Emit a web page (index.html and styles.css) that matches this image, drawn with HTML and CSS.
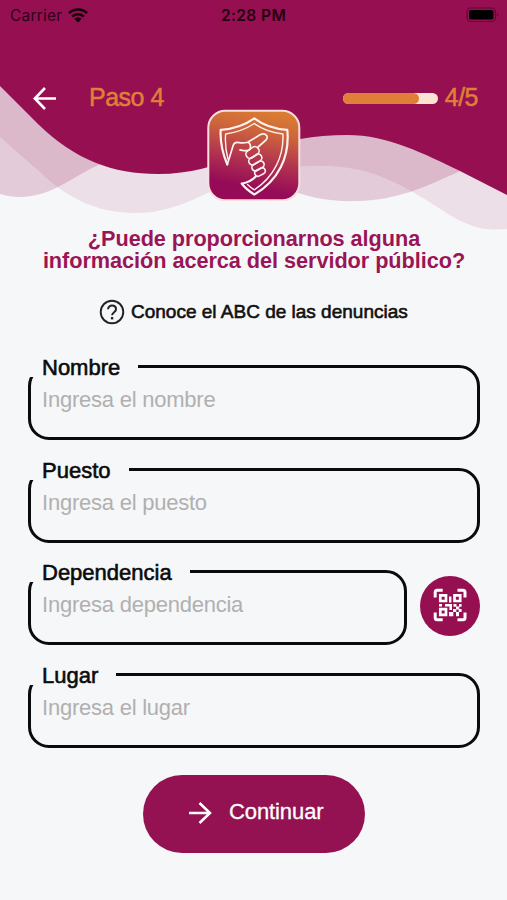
FILE: index.html
```html
<!DOCTYPE html>
<html lang="es">
<head>
<meta charset="utf-8">
<title>Paso 4</title>
<link rel="stylesheet" href="styles.css">
</head>
<body>
<div class="screen">
  <svg class="waves" viewBox="0 0 507 240" aria-hidden="true">
    <path fill="#940f50" fill-opacity=".1" d="M0 0V137L40 172C72 203 103 213 137 213C174 213 202 194 235 181C275 165 325 162 360 170C407 181 443 214 463 222C480 230 492 230 507 229V0Z"/>
    <path fill="#940f50" fill-opacity=".19" d="M0 0V194C18 199 36 198 58 187C76 178 91 166 115 159C180 140 240 168 280 186C307 198 332 202 358 201C397 200 426 187 460 171L507 120V0Z"/>
    <path fill="#960f51" d="M0 0V86L38 124C75 160 113 174 158 174C190 174 216 166 240 156C278 142 309 135 347 135C389 135 424 154 460 171L507 195V0Z"/>
  </svg>
  <header class="status">
    <div class="carrier"><span>Carrier</span>
      <svg width="20" height="15" viewBox="0 0 20 15"><g fill="none" stroke="#16000b" stroke-width="2.6"><path d="M1 5.2a12.8 12.8 0 0 1 18 0"/><path d="M4.1 8.7a8.3 8.3 0 0 1 11.8 0"/></g><path fill="#16000b" d="M6.3 10.8a5.3 5.3 0 0 1 7.4 0L10 14.6z"/></svg>
    </div>
    <span class="time">2:28 PM</span>
    <svg class="battery" width="34" height="16" viewBox="0 0 34 16"><rect x="1" y="1" width="28.500" height="13.500" rx="4" fill="none" stroke="#650735" stroke-width="1.200"/><rect x="3" y="3" width="24.500" height="9.500" rx="2" fill="#000"/><path d="M31.200 5.500q2 2.200 0 4.500z" fill="#650735"/></svg>
  </header>
  <nav class="steps">
    <svg width="24" height="24" viewBox="0 0 24 24" fill="none" stroke="#fff" stroke-width="2.600"><path d="M23 12.500H2M12 2L1.800 12.500L12 23"/></svg>
    <span class="step-name">Paso 4</span>
    <span class="track"><span class="bar"></span></span>
    <span class="count">4/5</span>
  </nav>
  <svg class="logo" width="94" height="92" viewBox="0 0 94 92">
    <defs><linearGradient id="sunset" x1=".6" y1="0" x2=".4" y2="1"><stop offset="0" stop-color="#da7c32"/><stop offset=".22" stop-color="#ce663c"/><stop offset=".6" stop-color="#ac2b51"/><stop offset=".85" stop-color="#960b58"/></linearGradient></defs>
    <rect x="1.300" y="1.800" width="91" height="89.400" rx="17" fill="url(#sunset)" stroke="#f8dfe0" stroke-width="2"/>
    <g fill="none" stroke="#fff1ed" stroke-linejoin="round" stroke-linecap="round">
      <path stroke-width="2.200" d="M20.300 55.500C15 43 13 32 13.700 20.800C26 20 38 16 47.300 9.300C56 16 68 20 80.300 20.800C83 48 71 72 47.300 85.500C42.500 82.500 38 79 34.700 74.500C40 74 45 71.500 48.700 67.500"/>
      <path stroke-width="1.400" d="M21 50C18.500 41 18 33 18.600 25C29 23.500 39 20 47.300 14.500C55 20 65 23.500 75.900 25C77 47 67 68 47.300 80.800C45 79.500 42.500 77.500 40.500 75.500"/>
      <path stroke-width="1.700" d="M20.300 55.500L26 37C27 33.500 29 33 32 33.600C35 34.200 38 34 40.700 33.300L53 25.700C58 23 62.500 27.500 59 31L50.500 38.500M33 40.800C40 42.500 43.500 42 43.500 38C43.500 35 42 33.500 40.700 33.300"/>
      <g stroke-width="1.600">
        <rect x="-7" y="-4.200" width="14" height="8.400" rx="4" transform="translate(45.500 43.500) rotate(-35)"/>
        <rect x="-7" y="-3.700" width="14" height="7.400" rx="3.600" transform="translate(48.300 50.500) rotate(-32)"/>
        <rect x="-6.500" y="-3.500" width="13" height="7" rx="3.500" transform="translate(51 57) rotate(-30)"/>
        <rect x="-5.500" y="-3.200" width="11" height="6.400" rx="3.200" transform="translate(53 63) rotate(-28)"/>
      </g>
    </g>
  </svg>
  <main>
    <h1><span class="first">¿Puede proporcionarnos alguna</span><span class="second">información acerca del servidor público?</span></h1>
    <div class="help">
      <svg width="26" height="26" viewBox="0 0 26 26" fill="none" stroke="#202226"><circle cx="13" cy="13" r="11.300" stroke-width="1.900"/><path stroke-width="2" d="M9.100 10.300C9.100 5.300 17 5.500 17 10.200C17 13.200 13.100 13.200 13.100 16.300"/><path stroke-width="2.300" d="M13.100 18v2.400"/></svg>
      <span>Conoce el ABC de las denuncias</span>
    </div>
    <form class="form">
      <div class="field"><label>Nombre</label><span class="hint">Ingresa el nombre</span></div>
      <div class="field"><label>Puesto</label><span class="hint">Ingresa el puesto</span></div>
      <div class="row">
        <div class="field"><label>Dependencia</label><span class="hint">Ingresa dependencia</span></div>
        <div class="scan">
          <svg width="34" height="34" viewBox="0 0 34 34"><g fill="none" stroke="#fff"><path stroke-width="3" d="M2.200 9.500V4.200q0-2 2-2h5.500M24.500 2.200h5.500q2 0 2 2v5.300M32 24.500v5.300q0 2-2 2h-5.500M9.700 31.800H4.200q-2 0-2-2v-5.300"/><path stroke-width="2.700" d="M7.300 7.300h5.700v5.700H7.300zM21.500 7.300h5.700v5.700h-5.700zM7.300 21.200h5.700v5.700H7.300z"/></g><path fill="#fff" d="M16 8.500h2.400v6H16zM6 16h3v2.500H6zM12 16h7v6h-2.600v-3.400H12zM20.500 16h3v2.700h-3zM26 16h2.600v2.800H26zM23 18.500h3.300v3H23zM20 21h3.300v3H20zM25.700 21h2.900v3h-2.900zM16 24h4.300v4.200H16zM23 24h3v4.200h-3z"/></svg>
        </div>
      </div>
      <div class="field"><label>Lugar</label><span class="hint">Ingresa el lugar</span></div>
      <div class="submit">
        <svg width="24" height="24" viewBox="0 0 24 24" fill="none" stroke="#fff" stroke-width="2.500"><path d="M1 12h21M11.500 2L22 12L11.500 22"/></svg>
        <span>Continuar</span>
      </div>
    </form>
  </main>
</div>
</body>
</html>
```
FILE: styles.css
```css
* { box-sizing: border-box; }
body { margin: 0; background: #f6f7f9; font-family: "Liberation Sans", Arial, sans-serif; }
.screen { position: relative; width: 507px; height: 900px; overflow: hidden; display: flex; flex-direction: column; }
.waves { position: absolute; left: 0; top: 0; width: 507px; height: 240px; z-index: -1; }
svg { display: block; flex: none; }
.status { height: 30px; padding: 0 7px 0 10px; display: grid; grid-template-columns: 1fr auto 1fr; align-items: center; font-family: Inter, sans-serif; font-size: 15.5px; color: #2d0018; }
.carrier { display: flex; align-items: center; gap: 6px; letter-spacing: .2px; }
.time { font-weight: 600; letter-spacing: .4px; margin-left: -3px; color: #22000f; }
.battery { justify-self: end; }
.steps { height: 30px; margin-top: 53px; padding: 0 29px 0 33px; display: flex; align-items: center; color: #df8038; font-size: 25px; line-height: 30px; -webkit-text-stroke: .5px #df8038; }
.step-name { margin: -2px 0 0 32px; letter-spacing: -.5px; }
.track { width: 95px; height: 11px; margin: 1px 7px 0 auto; border-radius: 6px; background: #fbe4d3; }
.bar { display: block; width: 80%; height: 100%; border-radius: 6px; background: #df8038; }
.count { letter-spacing: -.5px; margin-top: -2px; }
.logo { margin: -4px 0 0 207px; }
main { padding: 0 27px 0 28px; }
h1 { margin: 27px 0 0; text-align: center; color: #9a1555; font-size: 21.7px; line-height: 22px; letter-spacing: -.05px; }
h1 span { display: block; }
.help { height: 26px; margin-top: 27px; padding-left: 71px; display: flex; align-items: center; gap: 6px; font-size: 19px; color: #111; -webkit-text-stroke: .6px #111; white-space: nowrap; }
.form { margin-top: 40px; display: flex; flex-direction: column; gap: 27.500px; }
.field { flex: 1; height: 75px; border: 3px solid #0b0b0c; border-radius: 21px; display: flex; flex-direction: column; align-items: flex-start; }
.field label { margin: -13px 0 0 -3px; height: 22px; padding: 0 18px 0 14px; background: #f6f7f9; font-size: 22px; line-height: 26px; color: #0b0b0c; -webkit-text-stroke: .6px #0b0b0c; }
.hint { margin: 11px 0 0 11px; font-size: 22px; line-height: 24px; letter-spacing: -.23px; color: #b0b0b0; white-space: nowrap; }
.form > .field { flex: none; }
.row { display: flex; align-items: center; gap: 13px; }
.scan { width: 60px; height: 60px; margin-top: -3px; border-radius: 50%; background: #960f51; display: grid; place-items: center; }
.scan svg { margin-top: -2px; }
.submit { width: 222px; height: 78px; margin: 0 0 0 115px; padding-left: 45px; border-radius: 39px; background: #941251; display: flex; align-items: center; gap: 17px; color: #fff; font-size: 22px; letter-spacing: -.1px; -webkit-text-stroke: .3px #fff; }
.submit span { margin-top: -4px; }
.submit svg { margin-top: -2px; }
```
